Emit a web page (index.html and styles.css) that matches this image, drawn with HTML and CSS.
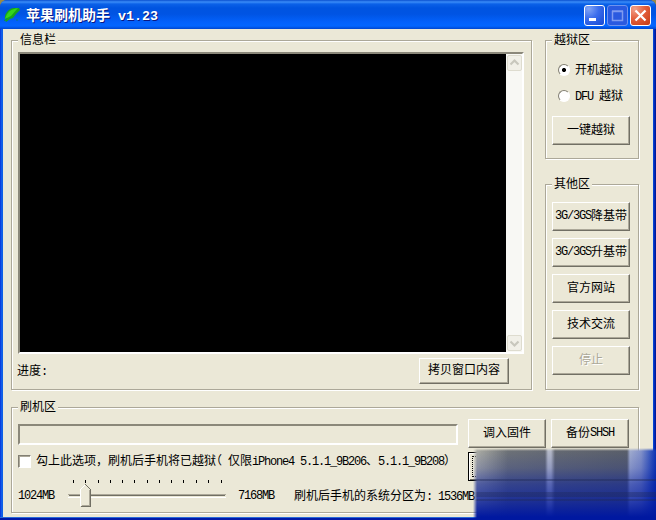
FILE: index.html
```html
<!DOCTYPE html>
<html lang="zh-CN">
<head>
<meta charset="utf-8">
<title>苹果刷机助手 v1.23</title>
<link rel="stylesheet" href="styles.css">
</head>
<body>
<div class="window">
  <header class="titlebar">
    <svg class="app-icon" width="16" height="16" viewBox="0 0 16 16"><path d="M1 13C0 7 4 2 9 1h6l1 2-4 4-3 4-3 1-4 3z" fill="#17a51b"/><path d="M1 12C3 5 7 2 14 1L7 9z" fill="#35d51c"/><path d="M0 14l3-3M12 13h2" stroke="#087c79" fill="none"/></svg>
    <h1 class="title">苹果刷机助手<span class="title-latin"> v1.23</span></h1>
    <div class="controls">
      <span class="control"><svg width="21" height="21"><path d="M5 14.500h7" stroke="#fff" stroke-width="3"/></svg></span>
      <span class="control control-off"><svg width="21" height="21"><path d="M5.500 6.500h10v9h-10zM5 6h11" stroke="#7f9bf0" stroke-width="1.500" fill="none"/></svg></span>
      <span class="control control-close"><svg width="21" height="21"><path d="M5.500 5.500l10 10M15.500 5.500l-10 10" stroke="#fff" stroke-width="2.300"/></svg></span>
    </div>
  </header>
  <main class="client">
    <div class="upper">
      <section class="group info">
        <h2 class="legend">信息栏</h2>
        <div class="console">
          <div class="screen"></div>
          <div class="scrollbar">
            <span class="arrow"><svg width="15" height="16"><path d="M3.500 9.500l4-4 4 4" stroke="#c8c7bd" stroke-width="2.200" fill="none"/></svg></span>
            <span class="arrow"><svg width="15" height="16"><path d="M3.500 6.500l4 4 4-4" stroke="#c8c7bd" stroke-width="2.200" fill="none"/></svg></span>
          </div>
        </div>
        <div class="info-foot">
          <span>进度<span class="l">:</span></span>
          <button class="btn copy">拷贝窗口内容</button>
        </div>
      </section>
      <div class="side">
        <section class="group jail">
          <h2 class="legend">越狱区</h2>
          <div class="option"><span class="radio radio-on"></span><span>开机越狱</span></div>
          <div class="option"><span class="radio"></span><span><span class="l">DFU </span>越狱</span></div>
          <button class="btn">一键越狱</button>
        </section>
        <section class="group other">
          <h2 class="legend">其他区</h2>
          <button class="btn"><span class="l">3G/3GS</span>降基带</button>
          <button class="btn"><span class="l">3G/3GS</span>升基带</button>
          <button class="btn">官方网站</button>
          <button class="btn">技术交流</button>
          <button class="btn btn-off" disabled>停止</button>
        </section>
      </div>
    </div>
    <section class="group flash">
      <h2 class="legend">刷机区</h2>
      <div class="flash-main">
        <div class="field"></div>
        <div class="check-row"><span class="checkbox"></span><span>勾上此选项，刷机后手机将已越狱<span class="open">（</span>仅限<span class="l">iPhone4 5.1.1_9B206</span>、<span class="l">5.1.1_9B208</span>）</span></div>
        <div class="slider-row">
          <span class="min l">1024MB</span>
          <svg class="slider" width="160" height="30" viewBox="0 0 160 30" shape-rendering="crispEdges">
            <path d="M5.500 1v3M17.500 1v3M30.500 1v3M42.500 1v3M54.500 1v3M66.500 1v3M79.500 1v3M91.500 1v3M103.500 1v3M115.500 1v3M128.500 1v3M140.500 1v3M153.500 1v3" stroke="#000"/>
            <path d="M0 15.500h158" stroke="#aca899"/><path d="M1 16.500h156" stroke="#716f64"/><path d="M0 18.500h158" stroke="#fff"/>
            <path d="M12.500 27V10.500l5-5 5 5V27z" fill="#ece9d8"/>
            <path d="M12.500 27V10.500l5-5" fill="none" stroke="#fff"/>
            <path d="M17.500 5.500l5 5V27.500h-10" fill="none" stroke="#716f64"/>
            <path d="M21.500 11v15.500h-8" fill="none" stroke="#aca899"/>
          </svg>
          <span class="max l">7168MB</span>
          <span class="partition">刷机后手机的系统分区为<span class="l">: 1536MB</span></span>
        </div>
      </div>
      <div class="actions">
        <button class="btn">调入固件</button>
        <button class="btn">备份<span class="l">SHSH</span></button>
        <button class="btn btn-default"><span class="focus"></span></button>
      </div>
    </section>
  </main>
  <div class="veil"><div class="veil-tint"></div></div>
</div>
</body>
</html>
```
FILE: styles.css
```css
* { box-sizing: border-box; }
body { margin: 0; width: 656px; height: 520px; overflow: hidden; background: #9c8a45; }
.window {
  position: relative; width: 656px; height: 520px; overflow: hidden;
  padding: 0 3px 3px; border-radius: 7px 7px 0 0;
  background:
    linear-gradient(#2a6ad8 0 1px, #0019a8 1px) 0 517px / 100% 3px no-repeat,
    linear-gradient(90deg, #0831d9, #166aee 2px, #0855dd 3px, #0855dd 653px, #0030c8 654px, #00138c);
  color: #000; font: 12px/14px "Liberation Sans", "Noto Sans CJK SC", sans-serif;
}
.titlebar {
  display: flex; align-items: center; height: 29px; margin: 0 -3px; padding: 1px 4px 0;
  background: linear-gradient(#0a50cf 0, #3a8cf8 2px, #0b61e8 4px, #0054e0 8px, #0054e3 14px, #0361fb 22px, #0366ff 26px, #0046cf 29px);
}
.title { margin: 0 auto 0 6px; color: #fff; font: bold 14px/20px "Noto Sans CJK SC", sans-serif; text-shadow: 1px 1px #0a1883; white-space: pre; }
.title-latin { font: bold 13.33px/20px "Liberation Mono", monospace; }
.controls { display: flex; gap: 2px; margin-right: 1px; }
.control { width: 21px; height: 21px; border: 1px solid #fff; border-radius: 3px; background: radial-gradient(circle at 20% 15%, #83a5f5, #3a6cec 45%, #1649d2); }
.control svg { display: block; margin: -1px; }
.control-off { border-color: #6f93ee; background: #2a5ae0; }
.control-close { background: radial-gradient(circle at 20% 15%, #f2a18a, #e4603d 45%, #c63a12); }
.client { height: 488px; padding: 11px 8px 0; background: #ebe8d7; }
.upper { display: flex; gap: 13px; height: 350px; }
.group { position: relative; border: 1px solid #aca899; box-shadow: 1px 1px #fff, inset 1px 1px #fff; }
.legend { position: absolute; left: 6px; top: -8px; margin: 0; padding: 0 2px; background: #ebe8d7; font: inherit; }
.info { width: 521px; padding: 11px 6px 0; }
.console { display: flex; width: 506px; height: 302px; border: 2px solid; border-color: #8b887a #fff #fff #8b887a; }
.screen { width: 486px; background: #000; }
.scrollbar { display: flex; flex-direction: column; justify-content: space-between; flex: 1; padding: 1px 0 1px 1px; background: #f8f8f4; }
.arrow { width: 15px; height: 16px; border: 1px solid #dedccf; border-radius: 2px; background: #f1f0e8; }
.arrow svg { display: block; margin: -1px; }
.info-foot { display: flex; justify-content: space-between; align-items: center; height: 26px; margin: 4px 16px 0 -1px; }
.btn {
  display: flex; align-items: center; justify-content: center; width: 78px; height: 29px; padding: 0 0 2px;
  border: 1px solid; border-color: #fff #716f64 #716f64 #fff; background: #ebe8d7;
  box-shadow: inset -1px -1px #aca899; color: #000; font: inherit; white-space: nowrap;
}
.copy { width: 90px; height: 26px; }
.side { width: 94px; display: flex; flex-direction: column; gap: 25px; }
.jail { height: 119px; padding: 16px 6px 0; }
.option { display: flex; align-items: center; gap: 5px; height: 26px; padding-left: 6px; white-space: pre; }
.jail .btn { margin-top: 7px; }
.radio { width: 12px; height: 12px; border: 1px solid; border-color: #827f73 #fff #fff #827f73; border-radius: 50%; background: #fff; }
.radio-on { background: radial-gradient(circle, #000 0 1.8px, #fff 2.3px); }
.other { height: 206px; display: flex; flex-direction: column; gap: 7px; padding: 17px 6px 0; }
.btn-off { color: #aca899; text-shadow: 1px 1px #fff; }
.l { font-family: "Liberation Mono", monospace; letter-spacing: -1.2px; white-space: pre; }
.flash { display: flex; width: 628px; height: 106px; margin-top: 17px; padding: 11px 9px 0 6px; }
.flash-main { width: 450px; padding-top: 5px; }
.field { width: 440px; height: 21px; border: 2px solid; border-color: #8b887a #fff #fff #8b887a; }
.check-row { display: flex; align-items: center; gap: 5px; height: 14px; margin-top: 9px; white-space: nowrap; }
.checkbox { width: 13px; height: 13px; border: 1px solid; border-color: #827f73 #fff #fff #827f73; background: #fff; box-shadow: inset 1px 1px #aca899; }
.open { display: inline-block; width: 12px; font-family: "Noto Sans CJK SC", sans-serif; line-height: 14px; font-feature-settings: "halt"; }
.slider-row { display: flex; align-items: center; height: 30px; margin-top: 11px; white-space: nowrap; }
.min { flex: none; width: 50px; margin-top: 4px; }
.slider { flex: none; }
.max { flex: none; width: 56px; margin: 4px 0 0 10px; }
.partition { margin-top: 4px; }
.actions { display: grid; grid-template-columns: 78px 78px; grid-auto-rows: 29px; gap: 4px 5px; }
.btn-default { border-color: #000; padding: 0 3px 1px; box-shadow: inset 1px 1px #fff, inset -1px -1px #716f64; }
.focus { width: 100%; height: 21px; border: 1px dotted #000; }
.veil {
  position: absolute; left: 473px; top: 448px; width: 183px; height: 72px;
  background:
    linear-gradient(90deg, rgba(216,214,196,.65), rgba(216,214,196,0) 35px),
    linear-gradient(90deg, #777b78 0, #696d72 72px, #b9bdc8 75px, #b9bdc8 78px, #686c70 82px, #5c6168 154px, #a4afcf 157px, #8796ca 168px, #0a34b5 183px);
  -webkit-mask-image: linear-gradient(90deg, transparent, #000 4px), linear-gradient(transparent, #000 3px);
  mask-image: linear-gradient(90deg, transparent, #000 4px), linear-gradient(transparent, #000 3px);
  -webkit-mask-composite: source-in;
  mask-composite: intersect;
}
.veil-tint {
  height: 100%;
  background:
    linear-gradient(transparent 31px, rgba(30,40,85,.4) 31px 33px, transparent 33px 44px, rgba(30,40,85,.35) 44px 49px, transparent 49px 51px, rgba(30,40,85,.35) 51px 53px, transparent 53px),
    linear-gradient(rgba(0,24,160,0), rgba(0,24,160,.2) 20px, rgba(0,24,160,.53) 36px, rgba(0,24,160,.75) 54px, #0018a0 69px);
}
```
